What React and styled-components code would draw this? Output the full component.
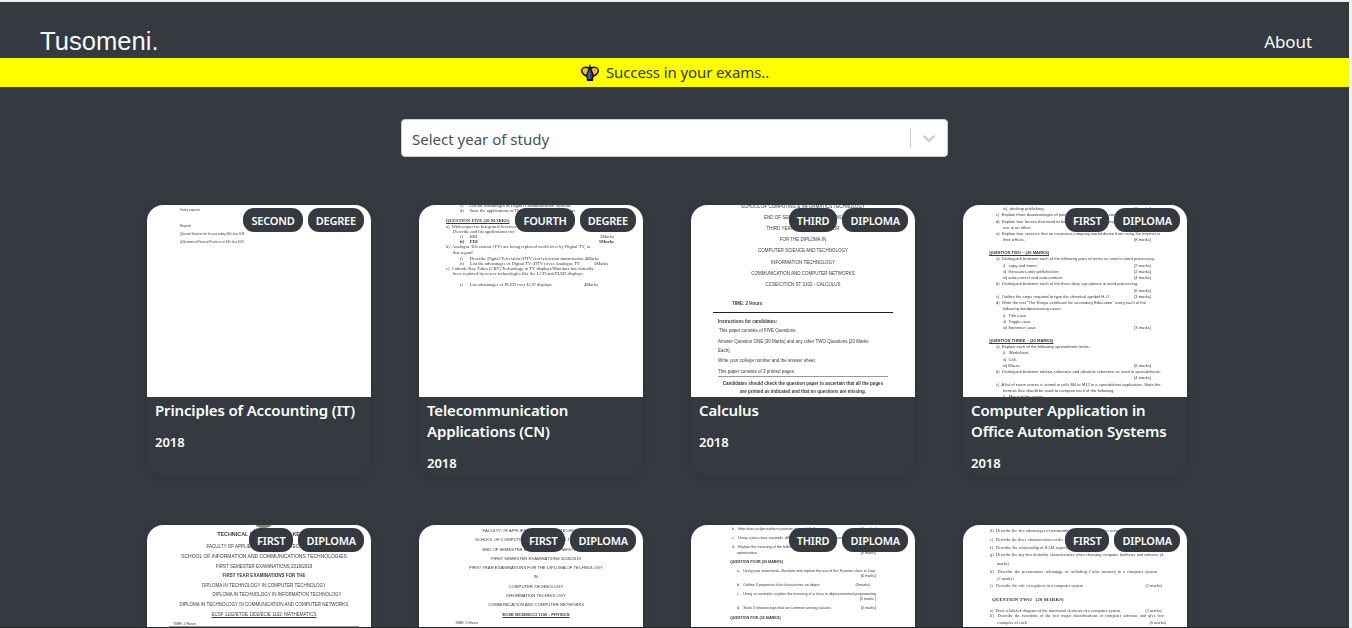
import React from "react";
import styled, { createGlobalStyle } from "styled-components";

const GlobalStyle = createGlobalStyle`
  html, body {
    margin: 0;
    padding: 0;
    height: 100%;
    overflow: hidden;
    background: #f1f1f1;
  }
  * {
    box-sizing: border-box;
  }
`;

// small helpers so the paper thumbnails below stay readable as data
const c = (t, gap = 0, opts = {}) => ({ t, gap, center: true, ...opts });
const l = (t, gap = 0, pad = 0, opts = {}) => ({ t, gap, pad, ...opts });

const papers = [
  {
    title: "Principles of Accounting (IT)",
    year: "2018",
    tags: ["SECOND", "DEGREE"],
    size: 2.6,
    leading: 5,
    top: 3,
    side: 33,
    lines: [
      l("Sundry expenses", 0),
      l("Required:", 11),
      l("(i)Income Statement for the year ending 30th June 2018", 3),
      l("(ii)Statement of Financial Position as at 30th June 2018", 3),
    ],
  },
  {
    title: "Telecommunication Applications (CN)",
    year: "2018",
    tags: ["FOURTH", "DEGREE"],
    size: 4.6,
    leading: 5.2,
    top: -2,
    side: 27,
    serif: true,
    lines: [
      l("c)     List the advantages of Digital Communication Systems", 0, 14),
      l("d)     State the applications of Digital Communication Systems", 0, 14),
      l("QUESTION FIVE (20 MARKS)", 5, 0, { bold: true, under: true }),
      l("a)  With respect to Integrated Services Digital Network", 0),
      l("Describe and list applications for:", 0, 7),
      l("i)      BRI", 0, 14, { mark: "5Marks", markPad: 2 }),
      l("ii)     PRI", 0, 14, { bold: true, mark: "5Marks", markPad: 2 }),
      l("b)  Analogue Televisions (TV) are being replaced world over by Digital TV, in", 0),
      l("this regard", 0, 7),
      l("i)      Describe Digital Television (DTV) for television transmission 4Marks", 1, 14),
      l("ii)     List the advantages of Digital TV (DTV) over Analogue TV", 0, 14, { mark: "5Marks", markPad: 8 }),
      l("c)  Cathode Ray Tubes (CRT) Technology in TV displays/Monitors has virtually", 0),
      l("been replaced by newer technologies like the LCD and PLED displays", 0, 7),
      l("i)      List advantages of PLED over LCD displays", 5, 14, { mark: "4Marks", markPad: 18 }),
    ],
  },
  {
    title: "Calculus",
    year: "2018",
    tags: ["THIRD", "DIPLOMA"],
    size: 4.5,
    leading: 5,
    top: -1,
    side: 22,
    lines: [
      c("SCHOOL OF COMPUTING & INFORMATICS TECHNOLOGY", 0),
      c("END OF SEMESTER EXAMINATIONS", 6),
      c("THIRD YEAR EXAMINATIONS FOR", 6),
      c("FOR THE DIPLOMA IN", 6),
      c("COMPUTER SCIENCE AND TECHNOLOGY", 6.3),
      c("INFORMATION TECHNOLOGY", 6.3),
      c("COMMUNICATION AND COMPUTER NETWORKS", 6.3),
      c("CCSE/CIT/CN ST 3102 - CALCULUS", 6.3),
      l("TIME: 2 Hours", 14, 19, { bold: true }),
      { rule: true, gap: 6, weight: 1, side: 0 },
      l("Instructions for candidates:", 6, 5, { bold: true }),
      l("This paper consists of FIVE Questions.", 4, 6),
      l("Answer Question ONE [30 Marks] and any other TWO Questions [20 Marks", 6, 5),
      l("Each].", 4, 5),
      l("Write your college number and the answer sheet.", 5, 5),
      l("This paper consists of 3 printed pages", 6, 5),
      { rule: true, gap: 2, weight: 0.5, side: 5, light: true },
      c("Candidates should check the question paper to ascertain that all the pages", 4, { bold: true }),
      c("are printed as indicated and that no questions are missing.", 3, { bold: true }),
    ],
  },
  {
    title: "Computer Application in Office Automation Systems",
    year: "2018",
    tags: ["FIRST", "DIPLOMA"],
    size: 4.1,
    leading: 6.25,
    top: 1,
    side: 33,
    lines: [
      l("iv)  desktop publishing;", 0, 7, { mark: "[3 marks]", markPad: 3 }),
      l("c)  Explain three disadvantages of point-and-click word processors in offices.", 0, 0),
      l("d)  Explain four factors that need to be considered when selecting software for", 0, 0),
      l("use in an office.", 0, 7),
      l("e)  Explain four services that an insurance company would derive from using the internet in", 0, 0),
      l("their offices.", 0, 7, { mark: "[8 marks]", markPad: 3 }),
      l("QUESTION TWO – (20 MARKS)", 6.5, -7, { bold: true, under: true }),
      l("a)  Distinguish between each of the following pairs of terms as used in word processing.", 0),
      l("i)   copy and move;", 0, 7, { mark: "[2 marks]", markPad: 3 }),
      l("ii)  thesaurus and spellchecker;", 0, 7, { mark: "[2 marks]", markPad: 3 }),
      l("iii) auto-correct and auto-content.", 0, 7, { mark: "[4 marks]", markPad: 3 }),
      l("b)  Distinguish between each of the three drop cap options in word processing.", 0),
      l("", 0, 0, { mark: "[6 marks]", markPad: 3 }),
      l("c)  Outline the steps required to type the chemical symbol H₂O.", 0, 0, { mark: "[3 marks]", markPad: 3 }),
      l("d)  Write the text \"The Kenya certificate for secondary Education\" using each of the", 0),
      l("following wordprocessing cases;", 0, 7),
      l("i)   Title case,", 0, 7),
      l("ii)  Toggle case,", 0, 7),
      l("iii) Sentence case.", 0, 7, { mark: "[3 marks]", markPad: 3 }),
      l("QUESTION THREE – (20 MARKS)", 6.5, -7, { bold: true, under: true }),
      l("a)  Explain each of the following spreadsheet terms.", 0),
      l("i)   Worksheet,", 0, 7),
      l("ii)  Cell,", 0, 7),
      l("iii) Macro.", 0, 7, { mark: "[6 marks]", markPad: 3 }),
      l("b)  Distinguish between relative reference and absolute reference as used in spreadsheets.", 0),
      l("", 0, 0, { mark: "[4 marks]", markPad: 3 }),
      l("c)  A list of exam scores is stored in cells M4 to M12 in a spreadsheet application. State the", 0),
      l("formula that should be used to compute each of the following;", 0, 7),
      l("i)   Mean of the scores", 0, 7),
    ],
  },
  {
    title: "Mathematics",
    year: "2018",
    tags: ["FIRST", "DIPLOMA"],
    size: 4.5,
    leading: 5,
    top: 7,
    side: 30,
    right: 20,
    crest: true,
    lines: [
      c("TECHNICAL UNIVERSITY OF KENYA", 0, { bold: true, size: 5.4 }),
      c("FACULTY OF APPLIED SCIENCES AND TECHNOLOGY", 7),
      c("SCHOOL OF INFORMATION AND COMMUNICATIONS TECHNOLOGIES", 4.6, { size: 5 }),
      c("FIRST SEMESTER EXAMINATIONS 2018/2019", 4.6),
      c("FIRST YEAR EXAMINATIONS FOR THE", 4.6, { bold: true }),
      c("DIPLOMA IN TECHNOLOGY IN COMPUTER TECHNOLOGY", 4.6),
      c("DIPLOMA IN TECHNOLOGY IN INFORMATION TECHNOLOGY", 4.6, { shift: 26 }),
      c("DIPLOMA IN TECHNOLOGY IN COMMUNICATION AND COMPUTER NETWORKS", 4.6),
      c("ECSF 1102/ETOE 1302/ECIE 1102: MATHEMATICS", 4.6, { under: true }),
      l("TIME: 2 Hours", 5.4, -4, { size: 3.6 }),
      { rule: true, gap: -1, weight: 1, side: -8, light: true },
    ],
  },
  {
    title: "Physics",
    year: "2018",
    tags: ["FIRST", "DIPLOMA"],
    size: 4.2,
    leading: 5,
    top: 3,
    side: 30,
    right: 20,
    lines: [
      c("FACULTY OF APPLIED SCIENCES AND TECHNOLOGY", 0),
      c("SCHOOL OF COMPUTING AND INFORMATION TECHNOLOGY", 4.3),
      c("END OF SEMESTER EXAMINATIONS SEMESTER ONE", 4.3),
      c("FIRST SEMESTER EXAMINATIONS 2018/2019", 4.3),
      c("FIRST YEAR EXAMINATIONS FOR THE DIPLOMA OF TECHNOLOGY", 4.3),
      c("IN", 4.3),
      c("COMPUTER TECHNOLOGY", 4.3),
      c("INFORMATION TECHNOLOGY", 4.3),
      c("COMMUNICATION AND COMPUTER NETWORKS", 4.3),
      c("ECSE /ECIE/ECCI 1100 : PHYSICS", 4.3, { bold: true, under: true }),
      l("TIME: 2 Hours", 4.3, 6, { size: 3.6 }),
    ],
  },
  {
    title: "Object Oriented Programming",
    year: "2018",
    tags: ["THIRD", "DIPLOMA"],
    size: 3.7,
    leading: 4.6,
    top: 2,
    side: 39,
    lines: [
      l("b.   How does polymorphism promote extensibility?", 0, 2, { mark: "[4 marks]", markPad: 0 }),
      l("c.   Using a java class example, differentiate between overriding and overloading", 4.5, 2),
      l("d.   Explain the meaning of the following terms as used in code", 4.5, 2),
      l("optimization", 1, 7, { mark: "[6 marks]", markPad: 0 }),
      l("QUESTION FOUR (20 MARKS)", 4.5, 0, { bold: true }),
      l("a.   Using java statements, illustrate and explain the use of the Scanner class in Java", 4.5, 7),
      l("", 0, 0, { mark: "[6 marks]", markPad: 0 }),
      l("b.   Outline 3 properties that characterize an object", 4.5, 7, { mark: "(6marks)", markPad: 6 }),
      l("c.   Using an example, explain the meaning of a class in object-oriented programming", 4.5, 7),
      l("", 1, 0, { mark: "[5 marks ]", markPad: 0 }),
      l("d.   State 3 relationships that are common among classes", 4.5, 7, { mark: "[4 marks]", markPad: 0 }),
      l("QUESTION FIVE (20 MARKS)", 4.5, 0, { bold: true }),
    ],
  },
  {
    title: "Computer Systems",
    year: "2018",
    tags: ["FIRST", "DIPLOMA"],
    size: 4.3,
    leading: 5,
    top: 3,
    side: 27,
    right: 21,
    serif: true,
    lines: [
      l("d)  Describe the five advantages of transmitting data over a computer network", 0),
      l("e)  Describe the three characteristics of the RAM memory", 4),
      l("f)   Describe the relationship of RAM capacity and processor speed", 3),
      l("g)  Describe the any two desirable characteristics when choosing computer hardware and software (4", 2),
      l("marks)", 4, 7),
      l("h)  Describe the performance advantage of including Cache memory in a computer system", 3, 0, { spread: true }),
      l("(2 marks)", 2, 7),
      l("i)   Describe the role of registers in a computer system", 2, 0, { mark: "(2 marks)", markPad: 4 }),
      l("QUESTION TWO   (20 MARKS)", 9, 2, { bold: true, size: 5 }),
      l("a)  Draw a labeled diagram of the functional elements of a computer system", 6, 0, { mark: "(3 marks)", markPad: 4 }),
      l("b)  Describe the functions of the two major classifications of computer software and give two", 0, 0, { spread: true }),
      l("examples of each", 2, 7, { mark: "(8 marks)", markPad: 0 }),
    ],
  },
];

const Tusomeni = () => (
  <Page>
    <GlobalStyle />
    <NavBar>
      <Brand>Tusomeni.</Brand>
      <NavLink href="#">About</NavLink>
    </NavBar>
    <Banner>
      <CrownIcon />
      <BannerText>Success in your exams..</BannerText>
    </Banner>
    <SelectRow>
      <YearSelect>
        <Placeholder>Select year of study</Placeholder>
        <Separator />
        <ChevronWrap>
          <svg width="20" height="20" viewBox="0 0 20 20" fill="#cccccc">
            <path d="M4.516 7.548c.436-.446 1.043-.481 1.576 0L10 11.295l3.908-3.747c.533-.481 1.141-.446 1.574 0 .436.445.408 1.197 0 1.615-.406.418-4.695 4.502-4.695 4.502a1.095 1.095 0 0 1-1.576 0S5.118 9.581 4.516 9.163c-.408-.418-.436-1.17 0-1.615z" />
          </svg>
        </ChevronWrap>
      </YearSelect>
    </SelectRow>
    <CardGrid>
      {papers.map((paper) => (
        <Card key={paper.title}>
          <Thumb>
            <PaperText
              $size={paper.size}
              $leading={paper.leading}
              $top={paper.top}
              $side={paper.side}
              $right={paper.right}
              $serif={paper.serif}
            >
              {paper.lines.map((line, i) =>
                line.rule ? (
                  <Rule key={i} $gap={line.gap} $weight={line.weight} $side={line.side} $light={line.light} />
                ) : (
                  <PaperLine
                    key={i}
                    $gap={line.gap}
                    $pad={line.pad}
                    $center={line.center}
                    $bold={line.bold}
                    $under={line.under}
                    $size={line.size}
                    $shift={line.shift}
                    $spread={line.spread}
                  >
                    <span>{line.t}</span>
                    {line.mark && <Mark $pad={line.markPad}>{line.mark}</Mark>}
                  </PaperLine>
                )
              )}
            </PaperText>
            {paper.crest && <Crest />}
            <TagRow>
              {paper.tags.map((tag) => (
                <Tag key={tag}>{tag}</Tag>
              ))}
            </TagRow>
          </Thumb>
          <CardBody>
            <CardTitle>{paper.title}</CardTitle>
            <CardYear>{paper.year}</CardYear>
          </CardBody>
        </Card>
      ))}
    </CardGrid>
  </Page>
);

const CrownIcon = () => (
  <svg width="20" height="20" viewBox="0 0 20 20">
    <path d="M10 1 L11 4 C13 3 18 3 19 7 C19.500 10 16 13 13.500 14 L13 18 L7 18 L6.500 14 C4 13 .5 10 1 7 C2 3 7 3 9 4 Z" fill="#111" />
    <path d="M2.500 6 C4.500 4.500 7 4.800 8.500 6 L6 12 C4 11 1.800 9 2.500 6 Z" fill="#f6b73c" />
    <path d="M17.500 6 C15.500 4.500 13 4.800 11.500 6 L14 12 C16 11 18.200 9 17.500 6 Z" fill="#f6b73c" />
    <path d="M10 6 L12.500 12 L12 16 L10 16 Z" fill="#4b2a7f" />
    <path d="M10 6 L7.500 12 L8 16 L10 16 Z" fill="#1f7f8c" />
  </svg>
);

export default Tusomeni;

const Page = styled.div`
  height: 628px;
  overflow: hidden;
  margin-right: 3px;
  border-top: 2px solid #eeeeee;
  border-bottom: 1px solid #23282b;
  background: #343a40;
  font-family: "Noto Sans", "Open Sans", sans-serif;
`;

const NavBar = styled.nav`
  height: 56px;
  display: flex;
  align-items: center;
  justify-content: space-between;
  padding: 21px 37px 0 40px;
`;

const Brand = styled.span`
  font-family: "Liberation Sans", Arial, sans-serif;
  font-size: 25.6px;
  color: #f8f9fa;
  line-height: 34px;
`;

const NavLink = styled.a`
  padding-top: 2px;
  font-size: 17px;
  letter-spacing: -0.1px;
  color: #f8f9fa;
  text-decoration: none;
  line-height: 27px;
`;

const Banner = styled.div`
  height: 29px;
  background: #ffff00;
  color: #343a40;
  display: flex;
  align-items: center;
  justify-content: center;
  gap: 6px;
  font-size: 15px;
  letter-spacing: -0.1px;
  line-height: 24px;
`;

const BannerText = styled.span`
  margin-top: -2px;
`;

const SelectRow = styled.div`
  display: flex;
  justify-content: center;
  padding-top: 32px;
`;

const YearSelect = styled.div`
  width: 547px;
  height: 38px;
  background: #ffffff;
  border: 1px solid #cccccc;
  border-radius: 4px;
  display: flex;
  align-items: center;
`;

const Placeholder = styled.span`
  flex: 1;
  padding: 2px 0 0 10px;
  font-size: 15px;
  color: #495057;
`;

const Separator = styled.span`
  width: 1px;
  height: 20px;
  background: #cccccc;
`;

const ChevronWrap = styled.span`
  width: 36px;
  display: flex;
  justify-content: center;
`;

const CardGrid = styled.div`
  display: grid;
  grid-template-columns: repeat(4, 224px);
  column-gap: 48px;
  row-gap: 49px;
  padding: 48px 0 0 147px;
`;

const Card = styled.article`
  height: 271px;
  border-radius: 16px;
  overflow: hidden;
  background: #343a40;
  box-shadow: 0 2px 8px rgba(0, 0, 0, 0.12);
  color: #ffffff;
`;

const Thumb = styled.div`
  position: relative;
  height: 192px;
  background: #ffffff;
  overflow: hidden;
`;

const PaperText = styled.div`
  padding: ${(p) => Math.max(p.$top, 0)}px ${(p) => p.$right ?? p.$side}px 0 ${(p) => p.$side}px;
  margin-top: ${(p) => Math.min(p.$top, 0)}px;
  font-family: ${(p) =>
    p.$serif ? '"Liberation Serif", serif' : '"Liberation Sans", sans-serif'};
  font-size: ${(p) => p.$size}px;
  line-height: ${(p) => p.$leading}px;
  color: #3a3a3a;
  filter: blur(0.45px);
`;

const PaperLine = styled.div`
  display: flex;
  justify-content: ${(p) => (p.$center ? "center" : "space-between")};
  margin-top: ${(p) => p.$gap || 0}px;
  padding-left: ${(p) => p.$shift || 0}px;
  margin-left: ${(p) => p.$pad || 0}px;
  min-height: 1em;
  white-space: pre;
  font-weight: ${(p) => (p.$bold ? 700 : 400)};
  text-decoration: ${(p) => (p.$under ? "underline" : "none")};
  ${(p) => p.$size && `font-size: ${p.$size}px;`}
  ${(p) => p.$spread && "word-spacing: 0.9px;"}
`;

const Mark = styled.span`
  margin-right: ${(p) => -(p.$pad || 0)}px;
  padding-right: ${(p) => p.$pad * 2 || 0}px;
`;

const Rule = styled.div`
  height: ${(p) => p.$weight}px;
  margin: ${(p) => p.$gap}px ${(p) => p.$side}px 0;
  background: ${(p) => (p.$light ? "#999999" : "#222222")};
`;

const Crest = styled.div`
  position: absolute;
  top: -6px;
  left: 108px;
  width: 17px;
  height: 9px;
  border-radius: 50%;
  background: #8a8478;
`;

const TagRow = styled.div`
  position: absolute;
  top: 3px;
  right: 7px;
  display: flex;
  gap: 5px;
`;

const Tag = styled.span`
  height: 24px;
  padding: 0 8px;
  border-radius: 11px;
  background: #343a40;
  color: #ffffff;
  font-size: 11px;
  font-weight: 600;
  letter-spacing: -0.2px;
  line-height: 26px;
`;

const CardBody = styled.div`
  padding: 3px 8px 0;
`;

const CardTitle = styled.h3`
  margin: 0;
  font-size: 15px;
  font-weight: 600;
  line-height: 21px;
  letter-spacing: -0.15px;
`;

const CardYear = styled.p`
  margin: 11px 0 0;
  font-size: 13px;
  font-weight: 600;
  line-height: 21px;
`;
